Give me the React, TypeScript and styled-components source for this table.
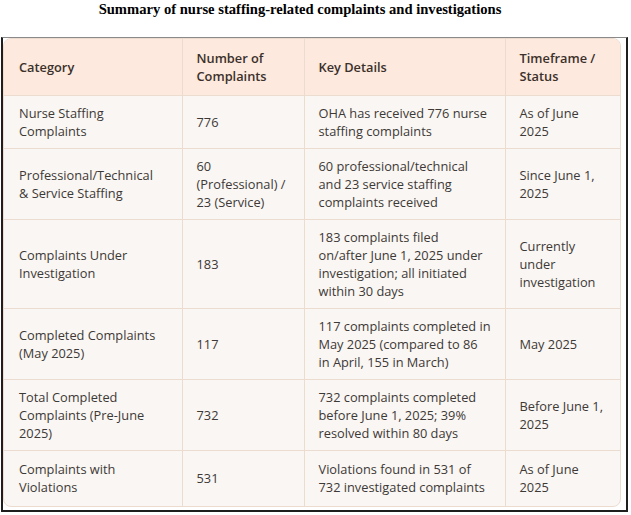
import React from "react";
import styled, { createGlobalStyle } from "styled-components";

// line breaks follow the source layout
interface Row {
	category: string;
	count: string;
	details: string;
	status: string;
}

const rows: Row[] = [
	{
		category: "Nurse Staffing\nComplaints",
		count: "776",
		details: "OHA has received 776 nurse\nstaffing complaints",
		status: "As of June\n2025",
	},
	{
		category: "Professional/Technical\n& Service Staffing",
		count: "60\n(Professional) /\n23 (Service)",
		details: "60 professional/technical\nand 23 service staffing\ncomplaints received",
		status: "Since June 1,\n2025",
	},
	{
		category: "Complaints Under\nInvestigation",
		count: "183",
		details: "183 complaints filed\non/after June 1, 2025 under\ninvestigation; all initiated\nwithin 30 days",
		status: "Currently\nunder\ninvestigation",
	},
	{
		category: "Completed Complaints\n(May 2025)",
		count: "117",
		details: "117 complaints completed in\nMay 2025 (compared to 86\nin April, 155 in March)",
		status: "May 2025",
	},
	{
		category: "Total Completed\nComplaints (Pre-June\n2025)",
		count: "732",
		details: "732 complaints completed\nbefore June 1, 2025; 39%\nresolved within 80 days",
		status: "Before June 1,\n2025",
	},
	{
		category: "Complaints with\nViolations",
		count: "531",
		details: "Violations found in 531 of\n732 investigated complaints",
		status: "As of June\n2025",
	},
];

const App = () => {
	return (
		<>
			<GlobalStyle />
			<Page>
				<Title>Summary of nurse staffing-related complaints and investigations</Title>
				<Frame>
					<TableWrap>
						<Table>
							<colgroup>
								<col style={{ width: 178 }} />
								<col style={{ width: 122 }} />
								<col style={{ width: 201 }} />
								<col />
							</colgroup>
							<thead>
								<tr>
									<Th>Category</Th>
									<Th>Number of{"\n"}Complaints</Th>
									<Th>Key Details</Th>
									<Th>Timeframe /{"\n"}Status</Th>
								</tr>
							</thead>
							<tbody>
								{rows.map((r) => (
									<tr key={r.category}>
										<Td>{r.category}</Td>
										<Td>{r.count}</Td>
										<Td>{r.details}</Td>
										<Td>{r.status}</Td>
									</tr>
								))}
							</tbody>
						</Table>
					</TableWrap>
				</Frame>
			</Page>
		</>
	);
};

export default App;

const GlobalStyle = createGlobalStyle`
	body {
		margin: 0;
		background: #ffffff;
	}
`;

const Page = styled.div`
	width: 631px;
	height: 515px;
	overflow: hidden;
`;

const Title = styled.div`
	width: 600px;
	height: 37px;
	padding-top: 1px;
	box-sizing: border-box;
	text-align: center;
	font-family: "Liberation Serif", serif;
	font-weight: bold;
	font-size: 14.6px;
	line-height: 17px;
	color: #000;
`;

const Frame = styled.div`
	margin-left: 1px;
	width: 627px;
	height: 475px;
	box-sizing: border-box;
	border: 2px solid #1e1e1e;
	border-top: 1px solid #8a8a8a;
	padding: 0 5px 3px 0;
`;

const TableWrap = styled.div`
	border: 1px solid #ecdccf;
	border-radius: 8px;
	overflow: hidden;
	background: #faf6f3;
`;

const Table = styled.table`
	width: 100%;
	border-collapse: collapse;
	table-layout: fixed;
	font-family: "Open Sans", sans-serif;
	font-size: 12.8px;
	line-height: 18px;
	color: #3d3936;

	tbody td {
		border-top: 1px solid #ecdccf;
	}

	tbody tr:last-child td {
		padding-top: 9px;
		padding-bottom: 10px;
	}

	th:first-child,
	td:first-child {
		padding-left: 15px;
	}
`;

const Th = styled.th`
	background: #fde9de;
	text-align: left;
	font-weight: 600;
	color: #3b302a;
	white-space: pre-line;
	padding: 10px 10px 10px 14px;
	height: 56px;
	box-sizing: border-box;
	& + & {
		border-left: 1px solid #ecdccf;
	}
`;

const Td = styled.td`
	padding: 8px 10px 8px 14px;
	vertical-align: middle;
	white-space: pre-line;
	& + & {
		border-left: 1px solid #ecdccf;
	}
`;
